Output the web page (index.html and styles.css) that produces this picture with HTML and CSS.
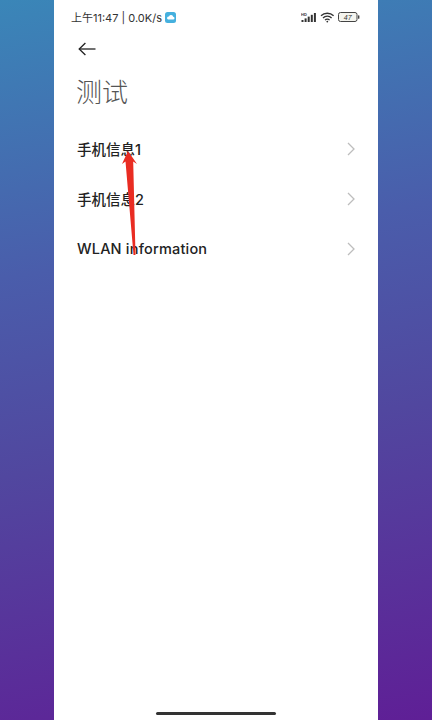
FILE: index.html
```html
<!DOCTYPE html>
<html lang="zh">
<head>
<meta charset="utf-8">
<title>测试</title>
<link rel="stylesheet" href="styles.css">
</head>
<body>
<main class="phone">
  <div class="status">
    <div class="status-left">
      <span>上午11:47 | 0.0K/s</span>
      <svg class="cloud" width="11" height="11" viewBox="0 0 11 11"><rect width="11" height="11" rx="2.5" fill="#45b0de"/><path d="M3 7.6h5a1.4 1.4 0 0 0 .2-2.8A2.2 2.2 0 0 0 4 4.4 1.7 1.7 0 0 0 3 7.6z" fill="#fff"/></svg>
    </div>
    <div class="status-right">
      <svg width="16" height="11" viewBox="0 0 16 11"><text x="0" y="3.6" class="hd">HD</text><g fill="#333"><rect x="0.5" y="8" width="2" height="2"/><rect x="3.6" y="6.4" width="2" height="3.6"/><rect x="6.7" y="4.6" width="2" height="5.4"/><rect x="9.8" y="2.8" width="2" height="7.2"/><rect x="12.9" y="1" width="2" height="9"/></g></svg>
      <svg width="15" height="11" viewBox="0 0 15 11" fill="none" stroke="#333" stroke-width="1.3"><path d="M1 3.800a9 9 0 0 1 12.600 0"/><path d="M3 6a6 6 0 0 1 8.600 0"/><path d="M5 8.100a3.200 3.200 0 0 1 4.600 0"/><circle cx="7.300" cy="9.600" r=".9" fill="#333" stroke="none"/></svg>
      <svg class="battery" width="22" height="10" viewBox="0 0 22 10"><rect x=".5" y=".5" width="18.500" height="9" rx="2" fill="#f4f4ee" stroke="#444"/><rect x="20" y="3.200" width="1.400" height="3.600" rx=".6" fill="#444"/><text x="9.700" y="7.600" class="batt">47</text></svg>
    </div>
  </div>
  <div class="back">
    <svg width="18" height="14" viewBox="0 0 18 14" fill="none" stroke="#222" stroke-width="1.300"><path d="M17.500 7H1.200"/><path d="M7.400 1 1.200 7l6.200 6"/></svg>
  </div>
  <h1 class="title">测试</h1>
  <ul class="list">
    <li class="row"><span>手机信息1</span><svg class="chev" width="8" height="14" viewBox="0 0 8 14" fill="none" stroke="#bdbdbd" stroke-width="1.300"><path d="m1 1 6 6-6 6"/></svg></li>
    <li class="row"><span>手机信息2</span><svg class="chev" width="8" height="14" viewBox="0 0 8 14" fill="none" stroke="#bdbdbd" stroke-width="1.300"><path d="m1 1 6 6-6 6"/></svg></li>
    <li class="row"><span class="latin">WLAN information</span><svg class="chev" width="8" height="14" viewBox="0 0 8 14" fill="none" stroke="#bdbdbd" stroke-width="1.300"><path d="m1 1 6 6-6 6"/></svg></li>
  </ul>
  <div class="home"></div>
  <svg class="arrow" width="18" height="106" viewBox="0 0 18 106"><path d="M7 0 16 13 12.200 10.500 14.500 104 12.500 104 4.500 10.500 1 13z" fill="#e92c22"/></svg>
</main>
</body>
</html>
```
FILE: styles.css
```css
* { box-sizing: border-box; }
html, body { margin: 0; height: 720px; overflow: hidden; }
body {
  background: linear-gradient(170deg, #3a86b8 0%, #4a5dab 35%, #51479f 60%, #5f1f96 100%);
  display: flex;
  justify-content: center;
  font-family: Inter, "Noto Sans CJK SC", sans-serif;
}
.phone {
  position: relative;
  width: 324px;
  height: 720px;
  background: #fff;
  display: flex;
  flex-direction: column;
}
.status {
  height: 34px;
  padding: 0 18px 0 17px;
  display: flex;
  justify-content: space-between;
  align-items: center;
  color: #333;
  font-size: 11px;
}
.status-left, .status-right { display: flex; align-items: center; gap: 3px; }
.hd { font: 700 4px "Liberation Sans", sans-serif; fill: #333; }
.batt { font: italic 7px "Liberation Sans", sans-serif; fill: #333; text-anchor: middle; }
.back { height: 30px; padding: 0 0 0 24px; display: flex; align-items: center; }
.title {
  margin: 0;
  padding: 7px 0 0 22px;
  height: 59px;
  font-size: 26px;
  font-weight: 300;
  line-height: 44px;
  color: #555;
}
.list { list-style: none; margin: 0; padding: 0 23px; }
.row {
  height: 50px;
  display: flex;
  justify-content: space-between;
  align-items: center;
  font-size: 14.500px;
  font-weight: 500;
  color: #222;
}
.latin { letter-spacing: .2px; }
.chev { margin-top: 2px; }
.home {
  position: absolute;
  left: 102px;
  bottom: 5px;
  width: 120px;
  height: 3px;
  border-radius: 2px;
  background: #333;
}
.arrow { position: absolute; left: 67px; top: 151px; }
```
